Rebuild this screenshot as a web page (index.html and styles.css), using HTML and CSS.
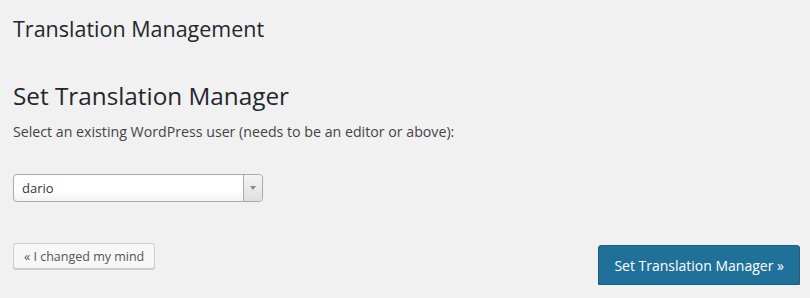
FILE: index.html
```html
<!DOCTYPE html>
<html>
<head>
<meta charset="utf-8">
<link rel="stylesheet" href="styles.css">
</head>
<body>
<div class="wrap">
  <h1 class="title">Translation Management</h1>
  <h2 class="subtitle">Set Translation Manager</h2>
  <p class="desc">Select an existing WordPress user (needs to be an editor or above):</p>
  <div class="select">
    <span class="select-value">dario</span>
    <span class="select-arrow"><span class="caret"></span></span>
  </div>
  <div class="actions">
    <button class="btn btn-secondary">« I changed my mind</button>
    <button class="btn btn-primary">Set Translation Manager »</button>
  </div>
</div>
</body>
</html>
```
FILE: styles.css
```css
html, body {
  margin: 0;
  padding: 0;
  background: #f1f1f1;
}
body {
  font-family: "Open Sans", "Noto Sans", sans-serif;
  color: #23282d;
}
.wrap {
  padding: 14px 10px 0 13px;
  width: 787px;
}
.title {
  margin: 0;
  font-size: 21.5px;
  font-weight: 400;
  line-height: 30px;
  height: 30px;
}
.subtitle {
  margin: 35px 0 0 0;
  font-size: 24.3px;
  font-weight: 400;
  line-height: 34px;
}
.desc {
  margin: 9px 0 0 0;
  font-size: 14.2px;
  line-height: 20px;
  color: #444;
}
.select {
  margin-top: 32px;
  width: 248px;
  height: 26px;
  border: 1px solid #aaa;
  border-radius: 4px;
  background: linear-gradient(#ffffff 60%, #f2f2f2);
  display: flex;
  align-items: stretch;
}
.select-value {
  flex: 1;
  padding-left: 8px;
  font-size: 13px;
  line-height: 26px;
  color: #32373c;
}
.select-arrow {
  width: 18px;
  border-left: 1px solid #aaa;
  background: linear-gradient(#f4f4f4, #e0e0e0);
  border-radius: 0 4px 4px 0;
  display: flex;
  align-items: center;
  justify-content: center;
}
.caret {
  width: 0;
  height: 0;
  border-left: 3px solid transparent;
  border-right: 3px solid transparent;
  border-top: 4px solid #888;
}
.actions {
  margin-top: 41px;
  display: flex;
  justify-content: space-between;
  align-items: flex-start;
}
.btn {
  font-family: "Open Sans", "Noto Sans", sans-serif;
  cursor: pointer;
  border-radius: 3px;
}
.btn-secondary {
  height: 26px;
  padding: 0 10px;
  font-size: 12.5px;
  color: #555;
  background: #f7f7f7;
  border: 1px solid #ccc;
  box-shadow: 0 1px 0 #ccc;
}
.btn-primary {
  margin-top: 2px;
  height: 40px;
  padding: 0 15px;
  font-size: 14px;
  color: #fff;
  background: #20719a;
  border: 1px solid #1b6084;
  box-shadow: 0 1px 0 #185878;
}
```
